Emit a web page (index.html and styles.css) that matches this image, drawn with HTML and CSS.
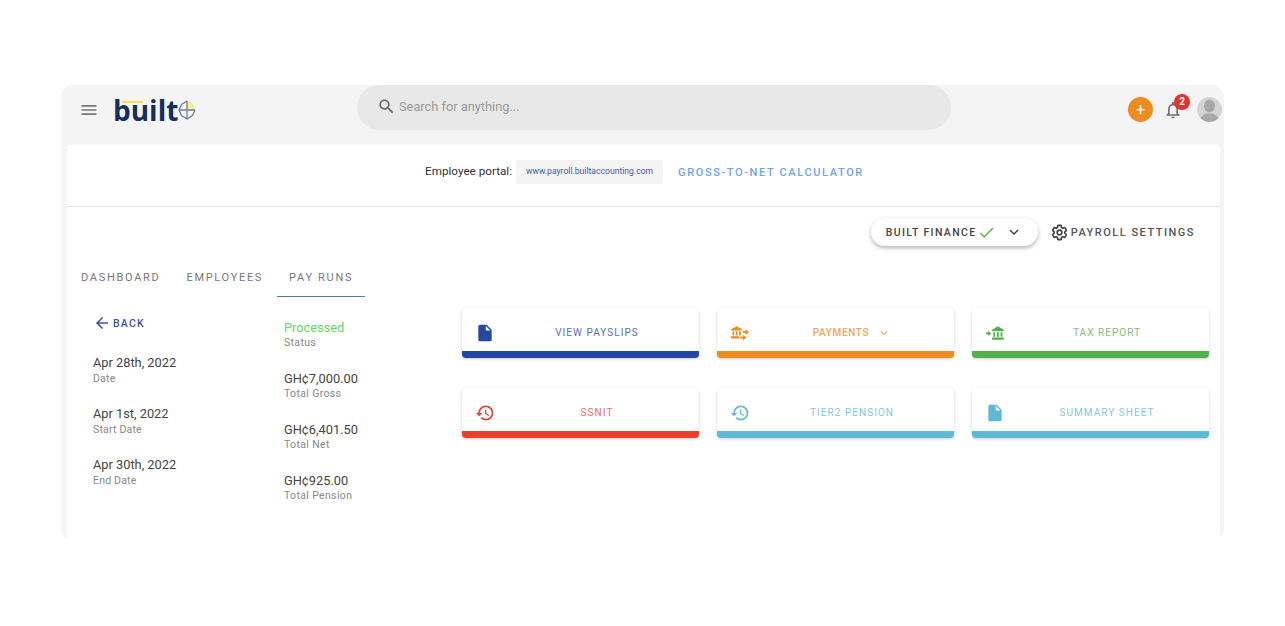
FILE: index.html
```html
<!DOCTYPE html>
<html lang="en">
<head>
<meta charset="utf-8">
<title>Built Payroll</title>
<link rel="stylesheet" href="styles.css">
</head>
<body>
<div class="app">
  <header class="topbar">
    <svg class="menu-icon" viewBox="0 0 24 24"><path d="M3 18h18v-2H3v2zm0-5h18v-2H3v2zm0-7v2h18V6H3z"/></svg>
    <div class="logo">
      <span class="logo-bar"></span>
      <span class="logo-text">built</span>
      <svg class="logo-mark" viewBox="0 0 18 20">
        <path d="M9 1 L14 4 L17 10 L9 10Z" fill="#fcec9c" stroke="#f8e070" stroke-width="1"/>
        <path d="M17 10 L14.500 15.500 L9 19 L3.500 15.500 L1 10 L3.500 4.500 L9 1 M1 10H17 M9 1V19" fill="none" stroke="#6d80a0" stroke-width="1.300"/>
      </svg>
    </div>
    <div class="search">
      <svg class="search-icon" viewBox="0 0 24 24"><path d="M15.500 14h-.79l-.28-.27C15.410 12.590 16 11.110 16 9.500 16 5.910 13.090 3 9.500 3S3 5.910 3 9.500 5.910 16 9.500 16c1.610 0 3.090-.59 4.230-1.570l.27.28v.79l5 4.990L20.490 19l-4.990-5zm-6 0C7.010 14 5 11.990 5 9.500S7.010 5 9.500 5 14 7.010 14 9.500 11.990 14 9.500 14z"/></svg>
      <span>Search for anything...</span>
    </div>
    <div class="top-actions">
      <div class="add-btn">+</div>
      <div class="bell">
        <svg class="bell-icon" viewBox="0 0 24 24"><path d="M12 22c1.100 0 2-.9 2-2h-4c0 1.100.89 2 2 2zm6-6v-5c0-3.070-1.640-5.640-4.500-6.320V4c0-.83-.67-1.500-1.500-1.500s-1.500.67-1.500 1.500v.68C7.630 5.360 6 7.920 6 11v5l-2 2v1h16v-1l-2-2zm-2 1H8v-6c0-2.480 1.510-4.500 4-4.500s4 2.020 4 4.500v6z"/></svg>
        <span class="badge">2</span>
      </div>
      <div class="avatar">
        <svg viewBox="0 0 25 25"><ellipse cx="12.500" cy="9" rx="5.500" ry="6.500"/><path d="M3 25c0-5 2.500-7 6.500-8.500h6c4 1.500 6.500 3.500 6.500 8.500z"/></svg>
      </div>
    </div>
  </header>

  <main class="panel">
    <section class="portal">
      <span class="portal-label">Employee portal:</span>
      <span class="portal-link">www.payroll.builtaccounting.com</span>
      <span class="calc-link">GROSS-TO-NET CALCULATOR</span>
    </section>

    <section class="settings-row">
      <div class="company">
        <span>BUILT FINANCE</span>
        <svg class="check" viewBox="0 0 24 24"><path d="M9 16.170 4.830 12l-1.420 1.410L9 19 21 7l-1.410-1.410z"/></svg>
        <svg class="chev" viewBox="0 0 24 24"><path d="M7.410 8.590 12 13.170l4.590-4.580L18 10l-6 6-6-6z"/></svg>
      </div>
      <div class="payroll-settings">
        <svg class="gear" viewBox="0 0 24 24"><path d="M19.430 12.980c.04-.32.07-.64.07-.98s-.03-.66-.07-.98l2.110-1.650c.19-.15.24-.42.12-.64l-2-3.460c-.12-.22-.39-.3-.61-.22l-2.490 1c-.52-.4-1.080-.73-1.690-.98l-.38-2.650C14.460 2.180 14.250 2 14 2h-4c-.25 0-.46.18-.49.42l-.38 2.650c-.61.25-1.170.59-1.690.98l-2.490-1c-.23-.09-.49 0-.61.22l-2 3.460c-.13.22-.07.49.12.64l2.110 1.650c-.04.32-.07.65-.07.98s.03.66.07.98l-2.110 1.650c-.19.15-.24.42-.12.64l2 3.460c.12.22.39.3.61.22l2.490-1c.52.4 1.080.73 1.690.98l.38 2.650c.03.24.24.42.49.42h4c.25 0 .46-.18.49-.42l.38-2.650c.61-.25 1.170-.59 1.690-.98l2.490 1c.23.09.49 0 .61-.22l2-3.460c.12-.22.07-.49-.12-.64l-2.110-1.650z"/><circle cx="12" cy="12" r="3.300"/></svg>
        <span>PAYROLL SETTINGS</span>
      </div>
    </section>

    <nav class="tabs">
      <span class="tab">DASHBOARD</span>
      <span class="tab">EMPLOYEES</span>
      <span class="tab active">PAY RUNS</span>
    </nav>

    <section class="content">
      <div class="col-dates">
        <div class="back">
          <svg viewBox="0 0 24 24"><path d="M20 11H7.830l5.590-5.590L12 4l-8 8 8 8 1.410-1.410L7.830 13H20v-2z"/></svg>
          <span>BACK</span>
        </div>
        <div class="stat"><div class="val">Apr 28th, 2022</div><div class="lbl">Date</div></div>
        <div class="stat"><div class="val">Apr 1st, 2022</div><div class="lbl">Start Date</div></div>
        <div class="stat"><div class="val">Apr 30th, 2022</div><div class="lbl">End Date</div></div>
      </div>
      <div class="col-totals">
        <div class="stat"><div class="val processed">Processed</div><div class="lbl">Status</div></div>
        <div class="stat"><div class="val">GH¢7,000.00</div><div class="lbl">Total Gross</div></div>
        <div class="stat"><div class="val">GH¢6,401.50</div><div class="lbl">Total Net</div></div>
        <div class="stat"><div class="val">GH¢925.00</div><div class="lbl">Total Pension</div></div>
      </div>
      <div class="cards">
        <div class="card blue">
          <svg class="card-icon" viewBox="0 0 24 24"><path d="M6 2c-1.100 0-1.990.9-1.990 2L4 20c0 1.100.89 2 1.990 2H18c1.100 0 2-.9 2-2V8l-6-6H6zm7 7V3.500L18.500 9H13z"/></svg>
          <span class="card-label">VIEW PAYSLIPS</span>
        </div>
        <div class="card orange">
          <svg class="card-icon" viewBox="0 0 24 24"><path d="M8 4 1.500 7.500V9h13V7.500zM3 10h2v5H3zM7 10h2v5H7zM11 10h2v5h-2zM1 16h10v2.500H1zM15 10h3.500V7.500L23 11l-4.500 3.500V12H15zM12 16.500h3.500V14l4.500 3.500L15.500 21v-2.500H12z"/></svg>
          <span class="card-label wide">PAYMENTS<svg class="card-chev" viewBox="0 0 24 24"><path d="M7.410 8.590 12 13.170l4.590-4.580L18 10l-6 6-6-6z"/></svg></span>
        </div>
        <div class="card green">
          <svg class="card-icon" viewBox="0 0 24 24"><path d="M15.500 4 8.500 8v2h14V8zM10 11h2.200v5.500H10zM14.300 11h2.200v5.500h-2.200zM18.700 11h2.200v5.500h-2.200zM8.500 17.500h14V20h-14zM1 11.500h3V9.500l3.500 3-3.500 3v-2H1z"/></svg>
          <span class="card-label">TAX REPORT</span>
        </div>
        <div class="card red">
          <svg class="card-icon" viewBox="0 0 24 24"><path d="M13 3c-4.970 0-9 4.030-9 9H1l3.890 3.890.07.14L9 12H6c0-3.870 3.130-7 7-7s7 3.130 7 7-3.130 7-7 7c-1.930 0-3.680-.79-4.940-2.060l-1.420 1.420C8.270 19.990 10.510 21 13 21c4.970 0 9-4.030 9-9s-4.030-9-9-9zm-1 5v5l4.280 2.540.72-1.210-3.500-2.080V8H12z"/></svg>
          <span class="card-label">SSNIT</span>
        </div>
        <div class="card teal">
          <svg class="card-icon" viewBox="0 0 24 24"><path d="M13 3c-4.970 0-9 4.030-9 9H1l3.890 3.890.07.14L9 12H6c0-3.870 3.130-7 7-7s7 3.130 7 7-3.130 7-7 7c-1.930 0-3.680-.79-4.940-2.060l-1.420 1.420C8.270 19.990 10.510 21 13 21c4.970 0 9-4.030 9-9s-4.030-9-9-9zm-1 5v5l4.280 2.540.72-1.210-3.500-2.080V8H12z"/></svg>
          <span class="card-label">TIER2 PENSION</span>
        </div>
        <div class="card teal">
          <svg class="card-icon" viewBox="0 0 24 24"><path d="M6 2c-1.100 0-1.990.9-1.990 2L4 20c0 1.100.89 2 1.990 2H18c1.100 0 2-.9 2-2V8l-6-6H6zm7 7V3.500L18.500 9H13z"/></svg>
          <span class="card-label">SUMMARY SHEET</span>
        </div>
      </div>
    </section>
  </main>
</div>
</body>
</html>
```
FILE: styles.css
```css
* { box-sizing: border-box; }
html, body { margin: 0; height: 100%; background: #fff; overflow: hidden; }
body { padding: 85px 61px 0; font-family: Roboto, "Liberation Sans", sans-serif; color: #333; }

.app {
  width: 1163px;
  height: 455px;
  background: #f4f4f4;
  border-radius: 12px;
  overflow: hidden;
  display: flex;
  flex-direction: column;
}

/* top bar */
.topbar { height: 60px; flex: none; display: flex; align-items: flex-start; }
.menu-icon { width: 20px; height: 20px; margin: 15px 0 0 18px; fill: #777; flex: none; }
.logo { width: 83px; height: 30px; margin: 10px 0 0 14px; flex: none; display: flex; align-items: center; position: relative; }
.logo-text { font-family: "Open Sans", sans-serif; font-weight: 700; font-size: 28px; line-height: 30px; color: #12305e; width: 65px; flex: none; }
.logo-bar { position: absolute; left: 9px; top: 6px; width: 21px; height: 2px; background: #f5e04a; }
.logo-mark { width: 18px; height: 20px; flex: none; }

.search {
  width: 594px;
  height: 45px;
  margin-left: 161px;
  flex: none;
  background: #e8e8e8;
  border-radius: 23px;
  display: flex;
  align-items: center;
  padding: 0 0 2px 20px;
  gap: 3px;
  font-size: 12.800px;
  color: #9a9a9a;
}
.search-icon { width: 19px; height: 19px; fill: #666; }

.top-actions { margin-left: auto; display: flex; flex: none; align-items: flex-start; }
.add-btn {
  width: 25px; height: 25px; margin-top: 12px; border-radius: 50%;
  background: #ee8c22; color: #fff; font-size: 16px; line-height: 25px; text-align: center; font-weight: 400;
}
.bell { width: 44px; height: 40px; position: relative; flex: none; }
.bell-icon { position: absolute; left: 10px; top: 15px; width: 20px; height: 20px; fill: #707070; }
.badge {
  position: absolute; left: 21px; top: 9px; width: 16px; height: 16px; border-radius: 50%;
  background: #e5322d; color: #fff; font-size: 10px; font-weight: 700; line-height: 16px; text-align: center;
}
.avatar { width: 25px; height: 25px; margin: 12px 2px 0 0; border-radius: 50%; background: #d4d4d4; overflow: hidden; flex: none; }
.avatar svg { display: block; width: 25px; height: 25px; fill: #a8a8a8; }

/* panel */
.panel { flex: 1; margin: 0 4px 0 6px; background: #fff; border-radius: 4px 4px 0 0; }

.portal {
  height: 62px;
  border-bottom: 1px solid #e0e0e0;
  display: flex;
  align-items: center;
  justify-content: center;
  padding: 0 0 8px 2px;
}
.portal-label { font-size: 11.700px; color: #333; margin: 0 4px 2px 0; }
.portal-link {
  width: 147px; height: 24px; background: #f4f4f4; border-radius: 2px;
  font-size: 8.600px; color: #4a58a8; line-height: 22px; text-align: center; margin-right: 15px;
}
.calc-link { font-size: 11px; font-weight: 500; letter-spacing: 1.630px; color: #6ea4ee; margin-top: 2px; }

.settings-row { height: 51px; padding: 11px 25px 0 0; display: flex; justify-content: flex-end; align-items: flex-start; }
.company {
  width: 167px; height: 28px; border-radius: 14px; background: #fff;
  box-shadow: 0 2px 4px rgba(0,0,0,.3);
  display: flex; align-items: center; padding-left: 15px;
  font-size: 10.500px; font-weight: 500; letter-spacing: 1.350px; color: #444;
  margin-right: 14px;
}
.check { width: 19px; height: 19px; margin-left: 1px; fill: #5cb85c; flex: none; }
.chev { width: 18px; height: 18px; margin-left: 9px; fill: #444; flex: none; }
.payroll-settings { display: flex; align-items: center; height: 28px; font-size: 11px; font-weight: 500; letter-spacing: 1.500px; color: #555; }
.gear { width: 17px; height: 17px; margin: 0 3px 0 -1px; fill: none; stroke: #444; stroke-width: 2.300; }

.tabs { display: flex; gap: 2px; height: 39px; padding-left: 2px; }
.tab {
  padding: 0 12px; height: 39px; line-height: 40px; font-size: 11px; font-weight: 400;
  letter-spacing: 1.700px; color: #777;
}
.tab.active { border-bottom: 1px solid #4a78b8; }

.content { display: flex; padding: 11px 0 0 26px; }
.col-dates { width: 191px; flex: none; }
.col-dates .lbl { margin-top: 1px; }
.col-totals { width: 178px; flex: none; padding-top: 12px; }
.back { display: flex; align-items: center; height: 16px; margin: 7px 0 24px 0; font-size: 10.500px; font-weight: 500; letter-spacing: 1.200px; color: #3b53a4; gap: 2px; }
.back svg { width: 18px; height: 18px; fill: #3b53a4; }
.stat { height: 51px; }
.val { font-size: 12.800px; line-height: 16px; color: #444; }
.lbl { font-size: 10.500px; line-height: 14px; color: #888; letter-spacing: .2px; }
.col-totals .lbl { letter-spacing: .35px; }
.processed { color: #66d66a; }

.cards { display: grid; grid-template-columns: repeat(3, 237px); grid-auto-rows: 50px; gap: 30px 18px; }
.card {
  display: flex; align-items: center;
  padding: 6px 0 0 13px;
  background: #fff;
  border-bottom: 7px solid;
  border-radius: 4px;
  box-shadow: 0 1px 3px rgba(0,0,0,.2);
  font-size: 10px;
  letter-spacing: 1.050px;
}
.card-icon { width: 20px; height: 20px; flex: none; fill: currentColor; }
.card-label { flex: 1; display: flex; justify-content: center; align-items: center; opacity: .78; }
.card-label.wide { font-weight: 500; letter-spacing: .65px; }
.card-chev { width: 14px; height: 14px; margin-left: 8px; fill: currentColor; }
.blue { border-color: #2547a4; color: #2547a4; }
.orange { border-color: #ee8c22; color: #ee8c22; }
.green { border-color: #52b04e; color: #52b04e; }
.red { border-color: #e83f2e; color: #e83f2e; }
.teal { border-color: #5db9d4; color: #5db9d4; }
```
